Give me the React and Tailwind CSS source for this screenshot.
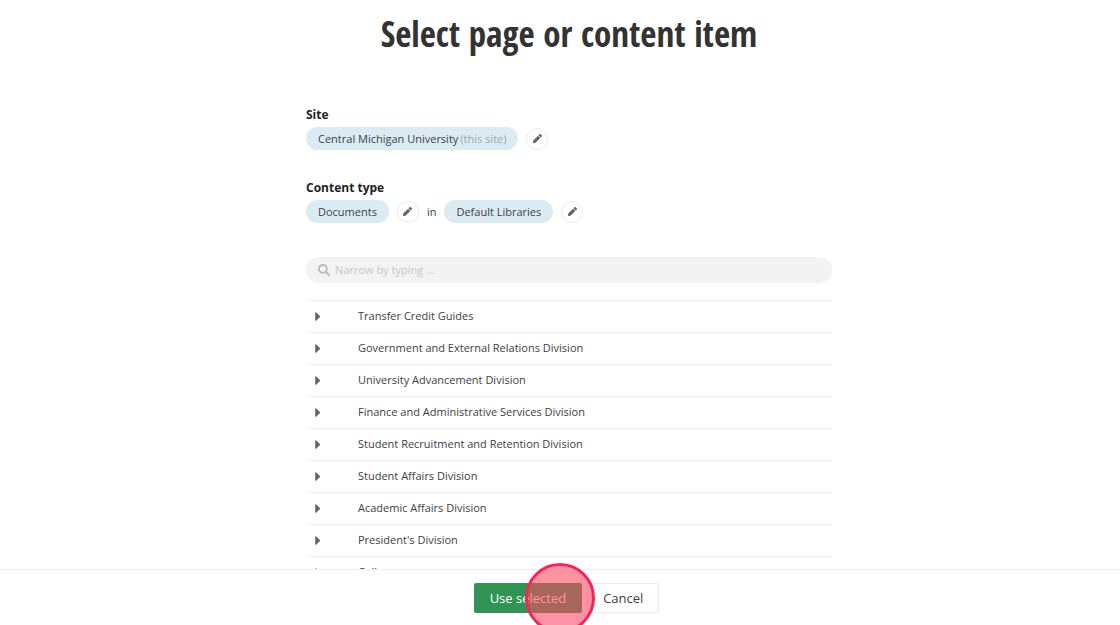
import React, { useState } from 'react';
import { FaPen, FaSearch, FaCaretRight } from 'react-icons/fa';

const folders = [
  'Transfer Credit Guides',
  'Government and External Relations Division',
  'University Advancement Division',
  'Finance and Administrative Services Division',
  'Student Recruitment and Retention Division',
  'Student Affairs Division',
  'Academic Affairs Division',
  "President's Division",
  'Colleges',
];

function Chip({ children }) {
  return (
    <span className="h-[23px] px-3 flex items-center rounded-full bg-[#dbebf4] whitespace-nowrap">
      {children}
    </span>
  );
}

function EditButton({ label }) {
  return (
    <button
      type="button"
      aria-label={label}
      className="w-[22px] h-[22px] flex items-center justify-center rounded-full border border-[#ececec] bg-white text-[#666666]"
    >
      <FaPen size={9} />
    </button>
  );
}

export default function App() {
  const [filter, setFilter] = useState('');

  const visible = folders.filter(name => name.toLowerCase().includes(filter.toLowerCase()));

  return (
    <div className="h-screen overflow-hidden flex flex-col bg-white font-['Open_Sans','Noto_Sans',sans-serif] text-[11px] leading-4 text-[#404040]">
      <main className="flex-1 min-h-0 overflow-hidden pl-[18px]">
        <div className="max-w-[526px] mx-auto pt-[14px]">
          <h1 className="text-center text-[35px] leading-10 font-bold text-[#333333] whitespace-nowrap font-['Open_Sans_Condensed','Noto_Sans_Condensed','Liberation_Sans_Narrow',sans-serif]">
            Select page or content item
          </h1>

          <section className="mt-[53px]">
            <h2 className="text-xs leading-4 font-bold text-[#222222]">Site</h2>
            <div className="mt-1 flex items-center gap-2">
              <Chip>
                Central Michigan University
                <span className="ml-[2px] text-[#9ba6ad]">(this site)</span>
              </Chip>
              <EditButton label="Change site" />
            </div>
          </section>

          <section className="mt-[30px]">
            <h2 className="text-xs leading-4 font-bold text-[#222222]">Content type</h2>
            <div className="mt-1 flex items-center gap-2">
              <Chip>Documents</Chip>
              <EditButton label="Change content type" />
              <span>in</span>
              <Chip>Default Libraries</Chip>
              <EditButton label="Change library" />
            </div>
          </section>

          <label className="mt-[34px] h-[26px] px-3 flex items-center gap-[5px] rounded-full bg-[#f3f3f3]">
            <FaSearch size={12} className="text-[#bbbbbb]" />
            <input
              type="text"
              aria-label="Narrow by typing"
              placeholder="Narrow by typing ..."
              value={filter}
              onChange={e => setFilter(e.target.value)}
              className="flex-1 bg-transparent outline-none placeholder:text-[#c8c8c8]"
            />
          </label>

          <ul className="mt-[17px]">
            {visible.map(name => (
              <li key={name} className="h-8 pb-px border-t border-[#f0f0f0] flex items-center">
                <button type="button" aria-label={`Expand ${name}`} className="w-[52px] pl-2 text-[#666666]">
                  <FaCaretRight size={15} className="w-2" />
                </button>
                <span>{name}</span>
              </li>
            ))}
          </ul>
        </div>
      </main>

      <footer className="h-14 shrink-0 border-t border-[#f0f0f0] pl-[13px] flex items-center justify-center gap-[5px] text-[13px]">
        <div className="relative">
          <button type="button" className="h-[30px] px-4 rounded-[2px] bg-[#319455] text-white">
            Use selected
          </button>
          {/* click marker */}
          <span className="absolute -top-5 right-[-13px] w-[70px] h-[70px] rounded-full border-3 border-[#ea2a5b] bg-[#ff435e]/58 pointer-events-none z-10" />
        </div>
        <button type="button" className="h-[30px] px-[15px] rounded-[2px] border border-[#ececec] bg-white">
          Cancel
        </button>
      </footer>
    </div>
  );
}
